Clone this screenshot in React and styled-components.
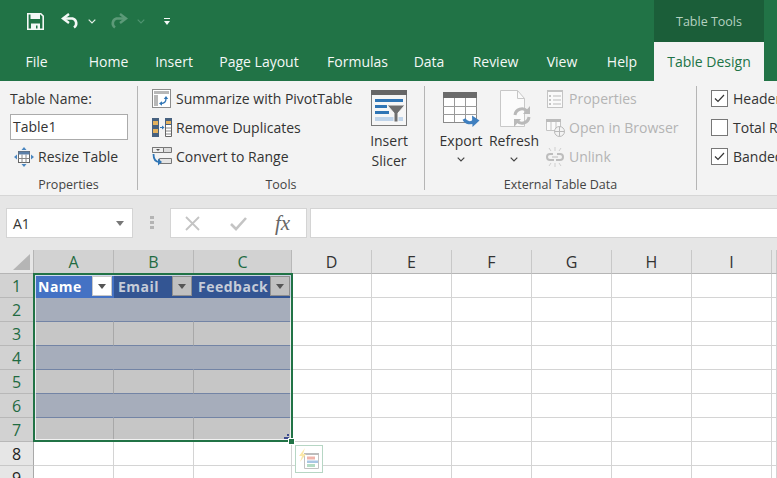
import React from 'react';
import styled, { createGlobalStyle } from 'styled-components';

const Global = createGlobalStyle`
  html, body { margin: 0; padding: 0; height: 100%; overflow: hidden; background: #fff; }
  body { font-family: "Open Sans", "Noto Sans", "Liberation Sans", sans-serif; font-size: 14px; color: #333; }
  * { box-sizing: border-box; }
  svg { display: block; flex: none; }
`;

const Window = styled.div`
  width: 777px;
  height: 478px;
  overflow: hidden;
  display: flex;
  flex-direction: column;
`;

const TitleBar = styled.div`
  height: 42px;
  flex: none;
  background: #217346;
  display: flex;
  align-items: center;
  padding-left: 27px;
`;

const Qat = styled.button`
  border: 0;
  padding: 0;
  background: none;
  display: flex;
  margin-left: ${p => p.$gap || 0}px;
`;

const ContextHeader = styled.div`
  margin-left: auto;
  margin-right: 13px;
  width: 110px;
  height: 42px;
  background: #1b5e39;
  color: #b5d1c1;
  font-size: 12.5px;
  display: flex;
  align-items: center;
  justify-content: center;
`;

const TabBar = styled.div`
  height: 39px;
  flex: none;
  background: #217346;
  display: flex;
`;

const Tab = styled.div`
  width: ${p => p.$w}px;
  height: 39px;
  line-height: 39px;
  text-align: center;
  white-space: nowrap;
  font-size: 14px;
  color: ${p => (p.$active ? '#217346' : '#f4f8f6')};
  background: ${p => (p.$active ? '#f3f3f3' : 'transparent')};
`;

const Ribbon = styled.div`
  height: 115px;
  background: #f3f3f3;
  border-bottom: 1px solid #d6d6d6;
  display: flex;
  flex: none;
`;

const Group = styled.div`
  width: ${p => p.$w}px;
  flex: none;
  display: flex;
  flex-direction: column;
  padding-top: 3px;
`;

const GroupBody = styled.div`
  display: flex;
  flex: 1;
  padding-left: ${p => p.$left || 0}px;
`;

const GroupLabel = styled.div`
  height: 20px;
  line-height: 20px;
  text-align: center;
  font-size: 12.5px;
  color: #444;
`;

const Sep = styled.div`
  width: 1px;
  flex: none;
  margin: 5px 0;
  background: #b5b5b5;
`;

const Stack = styled.div`
  display: flex;
  flex-direction: column;
  flex: none;
  width: ${p => (p.$w ? `${p.$w}px` : 'auto')};
  margin-left: ${p => p.$left || 0}px;
`;

const Row = styled.div`
  height: 29px;
  display: flex;
  align-items: center;
  gap: ${p => p.$gap ?? 4}px;
  white-space: nowrap;
  padding-left: ${p => p.$left || 0}px;
  color: ${p => (p.$off ? '#b4b4b4' : '#333')};
`;

const NameInput = styled.div`
  width: 118px;
  height: 26px;
  margin: 1px 0 2px;
  background: #fff;
  border: 1px solid #ababab;
  padding-left: 2px;
  line-height: 24px;
`;

const BigButton = styled.div`
  width: ${p => p.$w}px;
  flex: none;
  display: flex;
  flex-direction: column;
  align-items: center;
  line-height: 20px;
  text-align: center;
  color: #333;
`;

const BigIcon = styled.div`
  height: 44px;
  padding-bottom: ${p => p.$lift || 0}px;
  padding-left: ${p => p.$shift || 0}px;
  margin-bottom: 3px;
  display: flex;
  align-items: flex-end;
`;

const BigChevron = styled.span`
  margin-top: 6px;
`;

const Check = styled.span`
  width: 17px;
  height: 17px;
  border: 1px solid #777;
  background: #fff;
  display: flex;
  align-items: center;
  justify-content: center;
  flex: none;
`;

const FormulaBar = styled.div`
  height: 54px;
  flex: none;
  background: #e6e6e6;
  display: flex;
  align-items: flex-start;
  padding: 12px 0 0 6px;
`;

const NameBox = styled.div`
  width: 127px;
  height: 30px;
  background: #fff;
  border: 1px solid #d4d4d4;
  display: flex;
  align-items: center;
  justify-content: space-between;
  padding: 0 8px 0 6px;
`;

const Grip = styled.div`
  width: 37px;
  height: 30px;
  display: flex;
  align-items: center;
  justify-content: center;
`;

const FormulaButtons = styled.div`
  width: 137px;
  height: 30px;
  background: #fff;
  border: 1px solid #d4d4d4;
  display: flex;
  align-items: center;
  padding-left: 14px;
`;

const FormulaButton = styled.span`
  display: flex;
  margin-left: ${p => p.$gap || 0}px;
`;

const Fx = styled.span`
  font-family: "Liberation Serif", serif;
  font-style: italic;
  font-size: 21px;
  line-height: 24px;
  color: #666;
  margin-left: 28px;
`;

const FormulaInput = styled.div`
  flex: 1;
  height: 30px;
  margin-left: 3px;
  background: #fff;
  border: 1px solid #d4d4d4;
  border-right: 0;
`;

const Sheet = styled.div`
  position: relative;
  flex: none;
  display: grid;
  grid-template-columns: 34px 80px 80px 98px repeat(6, 80px) 5px;
  grid-template-rows: repeat(10, 24px);
  background: #fff;
`;

const Corner = styled.div`
  background: #e6e6e6;
  border-right: 1px solid #b5b5b5;
  border-bottom: 1px solid #b5b5b5;
  display: flex;
  align-items: flex-end;
  justify-content: flex-end;
  padding: 0 3px 3px 0;
`;

const ColHead = styled.div`
  background: ${p => (p.$on ? '#d2d2d2' : '#e6e6e6')};
  color: ${p => (p.$on ? '#1f6b42' : '#333')};
  border-right: 1px solid ${p => (p.$on ? '#b8b8b8' : '#c8c8c8')};
  border-bottom: 1px solid ${p => (p.$on ? '#217346' : '#b5b5b5')};
  display: flex;
  align-items: center;
  justify-content: center;
  font-size: 16px;
`;

const RowHead = styled.div`
  background: ${p => (p.$on ? '#d2d2d2' : '#e6e6e6')};
  color: ${p => (p.$on ? '#1f6b42' : '#222')};
  border-right: 1px solid #a9a9a9;
  border-bottom: 1px solid ${p => (p.$on ? '#b8b8b8' : '#c8c8c8')};
  display: flex;
  align-items: center;
  justify-content: center;
  font-size: 16px;
`;

const Cell = styled.div`
  border-right: 1px solid #d4d4d4;
  border-bottom: 1px solid #d4d4d4;
`;

const HeadCell = styled.div`
  background: ${p => (p.$on ? '#4472c4' : '#335593')};
  color: ${p => (p.$on ? '#fff' : '#c6ccd8')};
  display: flex;
  align-items: center;
  justify-content: space-between;
  padding: 0 2px 0 4px;
  font-weight: bold;
  font-size: 14px;
  white-space: nowrap;
  letter-spacing: 0.5px;
`;

const FilterBtn = styled.span`
  width: 20px;
  height: 20px;
  flex: none;
  background: ${p => (p.$on ? '#fff' : '#c0c0c0')};
  border: 1px solid ${p => (p.$on ? '#c8c8c8' : '#8f8f8f')};
  display: flex;
  align-items: center;
  justify-content: center;
  &::after {
    content: '';
    border-left: 4px solid transparent;
    border-right: 4px solid transparent;
    border-top: 5px solid #555;
  }
`;

const BandCell = styled.div`
  background: ${p => (p.$band ? '#a6adbb' : '#c6c6c6')};
  border-bottom: 1px solid #7384a5;
  border-right: 1px solid ${p => (p.$band ? '#a6adbb' : '#a8a8a8')};
`;

const Selection = styled.div`
  position: absolute;
  left: 33px;
  top: 23px;
  width: 260px;
  height: 169px;
  border: 2px solid #217346;
  pointer-events: none;
  box-shadow: inset 0 0 0 1px rgba(255, 255, 255, 0.75);
`;

const Handle = styled.div`
  position: absolute;
  right: -3px;
  bottom: -4px;
  width: 5px;
  height: 5px;
  background: #217346;
  outline: 1px solid #fff;
`;

const TableGrip = styled.div`
  position: absolute;
  right: 2px;
  bottom: 1px;
  display: flex;
`;

const QuickAnalysis = styled.div`
  position: absolute;
  left: 295px;
  top: 195px;
  width: 28px;
  height: 28px;
  background: #fff;
  border: 1px solid #b6d6c4;
  display: flex;
  align-items: center;
  justify-content: center;
`;

const Chevron = ({ color = '#444', size = 8 }) => (
  <svg width={size} height="5" viewBox="0 0 8 5"><path d="M.7.7 4 4 7.3.7" fill="none" stroke={color} strokeWidth="1.2" /></svg>
);

const SaveIcon = () => (
  <svg width="17" height="17" viewBox="0 0 17 17">
    <path d="M.8.8h13l2.4 2.4v13H.8z" fill="none" stroke="#f4f8f6" strokeWidth="1.6" />
    <path d="M3.5 1v5h9.5V1" fill="#f4f8f6" />
    <path d="M4 16v-5.5h9V16h-2.5v-3.5H9V16z" fill="#f4f8f6" />
  </svg>
);

const UndoIcon = ({ color, flip }) => (
  <svg width="19" height="16" viewBox="0 0 19 16" style={flip ? { transform: 'scaleX(-1)' } : undefined}>
    <path d="M8 1 2 5.5 8 10" fill="none" stroke={color} strokeWidth="2.4" />
    <path d="M3 5.5h8.5a5 5 0 0 1 1.5 9" fill="none" stroke={color} strokeWidth="2.6" />
  </svg>
);

const QatMore = () => (
  <svg width="6" height="7" viewBox="0 0 6 7"><path d="M0 0h6v1H0zM0 3h6L3 7z" fill="#f4f8f6" /></svg>
);

const ResizeIcon = () => (
  <svg width="20" height="20" viewBox="0 0 20 20">
    <rect x="4.5" y="4.5" width="11" height="11" fill="#fff" stroke="#666" />
    <path d="M4.5 4.5h11v3h-11z" fill="#5b7fa8" />
    <path d="M8 7.5v8M12 7.5v8M4.5 11.500h11" stroke="#888" />
    <path d="M10 0l2.500 3h-5zM10 20l2.500-3h-5zM0 10l3-2.500v5zM20 10l-3-2.500v5z" fill="#4a86c0" />
  </svg>
);

const PivotIcon = () => (
  <svg width="19" height="19" viewBox="0 0 19 19">
    <rect x=".5" y=".5" width="18" height="18" fill="#fff" stroke="#8c8c8c" />
    <path d="M2 2h15v3H2zM2 6h4v11H2z" fill="#b8b8b8" />
    <path d="M9 14.500c3 0 5-1.500 5-5" fill="none" stroke="#2f75b5" strokeWidth="1.3" />
    <path d="M14 7l2.200 3h-4.400zM7 14.500l3-2.200v4.400z" fill="#2f75b5" />
  </svg>
);

const DupIcon = () => (
  <svg width="20" height="19" viewBox="0 0 20 19">
    <path d="M0 0h7v19H0z" fill="#47617f" />
    <path d="M1 3h5v4H1zM1 11h5v4H1z" fill="#e5b25d" />
    <path d="M13.5.5h6v18h-6z" fill="#fff" stroke="#666" />
    <path d="M13 0h7v7h-7z" fill="#47617f" />
    <path d="M14 3h5v3h-5z" fill="#e5b25d" />
    <path d="M14 10h5M14 13h5M14 16h5" stroke="#888" />
    <path d="M8 9.500h3" stroke="#2f75b5" /><path d="M10 7.500l2.500 2-2.500 2z" fill="#2f75b5" />
  </svg>
);

const ConvertIcon = () => (
  <svg width="20" height="19" viewBox="0 0 20 19">
    <path d="M.5.5h19v5H.5z" fill="#ddd" stroke="#777" />
    <path d="M.5.5h11v5H.5z" fill="#eee" stroke="#777" />
    <path d="M4 2h4L6 4z" fill="#555" />
    <path d="M7.5 11.500h12v5h-12z" fill="#e4e4e4" stroke="#777" />
    <path d="M1.500 7c0 6 2 8 6 8" fill="none" stroke="#2f75b5" strokeWidth="1.8" />
    <path d="M6 11.500l4 3.500-4 3.500z" fill="#2f75b5" />
  </svg>
);

const SlicerIcon = () => (
  <svg width="36" height="36" viewBox="0 0 36 36">
    <rect x=".5" y=".5" width="35" height="35" fill="#f6f6f6" stroke="#7a7a7a" />
    <path d="M0 0h36v5H0z" fill="#666" />
    <path d="M4 9h28v3H4zM4 15h12v3H4zM4 21h14v3H4z" fill="#2f75b5" />
    <path d="M4 27h28v4H4z" fill="#bfd4ea" />
    <path d="M16 15h18l-7 8v9h-4v-9z" fill="#6e6e6e" stroke="#f6f6f6" />
  </svg>
);

const ExportIcon = () => (
  <svg width="37" height="36" viewBox="0 0 37 36">
    <rect x=".5" y=".5" width="33" height="30" fill="#fff" stroke="#8a8a8a" />
    <path d="M0 0h34v6H0z" fill="#6b6b6b" />
    <path d="M11.500 6v24M22.500 6v24M0 14.500h34M0 22.500h34" stroke="#9a9a9a" />
    <path d="M21 27c2 4 7 5 10 2" fill="none" stroke="#3f7fbf" strokeWidth="3.2" />
    <path d="M29 23.500l7.500 5-7 6.500z" fill="#3f7fbf" />
  </svg>
);

const RefreshIcon = () => (
  <svg width="31" height="38" viewBox="0 0 31 38">
    <path d="M.5.5h17l7 8v28H.5z" fill="#fbfbfb" stroke="#c8c8c8" />
    <path d="M17.500.5v8h7" fill="none" stroke="#c8c8c8" />
    <path d="M15 25a7 7 0 0 1 12-4M29 27a7 7 0 0 1-12 4" fill="none" stroke="#b9b9b9" strokeWidth="3" />
    <path d="M30 16v8h-7zM14 37v-8h7z" fill="#b9b9b9" />
  </svg>
);

const PropsIcon = () => (
  <svg width="16" height="18" viewBox="0 0 16 18">
    <rect x=".5" y=".5" width="15" height="17" fill="#fafafa" stroke="#c4c4c4" />
    <path d="M0 0h16v2H0z" fill="#c4c4c4" />
    <path d="M6 6h8M6 10h8M6 14h8" stroke="#bbb" />
    <path d="M2 5h2v2H2zM2 9h2v2H2zM2 13h2v2H2z" fill="#c4c4c4" />
  </svg>
);

const BrowserIcon = () => (
  <svg width="19" height="18" viewBox="0 0 19 18">
    <path d="M.5.5h14v11H.5z" fill="#fafafa" stroke="#c4c4c4" />
    <path d="M0 0h15v3H0z" fill="#bbb" />
    <path d="M5 3v8M10 3v8" stroke="#c4c4c4" />
    <circle cx="13.5" cy="12.5" r="5" fill="#f3f3f3" stroke="#b9b9b9" />
    <path d="M8.500 12.500h10M13.500 7.500v10" stroke="#b9b9b9" />
  </svg>
);

const UnlinkIcon = () => (
  <svg width="18" height="20" viewBox="0 0 18 20">
    <path d="M7 7H4a3 3 0 0 0 0 6h4M11 7h3a3 3 0 0 1 0 6h-4" fill="none" stroke="#bdbdbd" strokeWidth="2" />
    <path d="M6 10h6" stroke="#bdbdbd" />
    <path d="M9 0v4M9 16v4M3 1l2 3M15 1l-2 3M3 19l2-3M15 19l-2-3" stroke="#cfcfcf" />
  </svg>
);

const Tick = ({ color = '#333', width = 1.2 }) => (
  <svg width="11" height="9" viewBox="0 0 11 9"><path d="M1 4.500 4 7.500 10 1" fill="none" stroke={color} strokeWidth={width} /></svg>
);

const QuickIcon = () => (
  <svg width="20" height="22" viewBox="0 0 20 22">
    <path d="M5.500 5.500h14v15h-14z" fill="#fff" stroke="#c2c2c2" />
    <path d="M5 5h15v2H5z" fill="#bcbcbc" />
    <path d="M8 8.500h8v3H8z" fill="#f0b4ab" />
    <path d="M8 12.500h11v2.500H8z" fill="#a9c7e4" />
    <path d="M8 16h8v3H8z" fill="#b5dcc5" />
    <path d="M6 0 0 8h3l-2 6 6-8H4z" fill="#fbe8a8" />
  </svg>
);

const tabs = [['File', 73], ['Home', 71], ['Insert', 60], ['Page Layout', 110], ['Formulas', 87], ['Data', 56], ['Review', 77], ['View', 56], ['Help', 64]];
// the last column only peeks in at the window edge, its letter is out of view
const cols = ['A', 'B', 'C', 'D', 'E', 'F', 'G', 'H', 'I', ''];
const headers = [['Name', true], ['Email', false], ['Feedback', false]];
const rows = [1, 2, 3, 4, 5, 6, 7, 8, 9];

const ColumnHeads = () => (
  <>
    <Corner>
      <svg width="17" height="16" viewBox="0 0 17 16"><path d="M17 0v16H0z" fill="#b5b5b5" /></svg>
    </Corner>
    {cols.map((c, i) => <ColHead key={i} $on={i < 3}>{c}</ColHead>)}
  </>
);

const SheetRow = ({ n }) => {
  const inTable = n >= 2 && n <= 7;
  return (
    <>
      <RowHead $on={n <= 7}>{n}</RowHead>
      {cols.map((c, i) => {
        if (n === 1 && i < 3) {
          return (
            <HeadCell key={i} $on={headers[i][1]}>
              {headers[i][0]}
              <FilterBtn $on={headers[i][1]} />
            </HeadCell>
          );
        }
        if (inTable && i < 3) return <BandCell key={i} $band={n % 2 === 0} />;
        return <Cell key={i} />;
      })}
    </>
  );
};

export default function App() {
  return (
    <Window>
      <Global />
      <TitleBar>
        <Qat><SaveIcon /></Qat>
        <Qat $gap={17}><UndoIcon color="#f4f8f6" /></Qat>
        <Qat $gap={8}><Chevron color="#e6efe9" /></Qat>
        <Qat $gap={13}><UndoIcon color="#5c9a78" flip /></Qat>
        <Qat $gap={9}><Chevron color="#4f9370" /></Qat>
        <Qat $gap={19}><QatMore /></Qat>
        <ContextHeader>Table Tools</ContextHeader>
      </TitleBar>
      <TabBar>
        {tabs.map(([t, w]) => <Tab key={t} $w={w}>{t}</Tab>)}
        <Tab $active $w={110}>Table Design</Tab>
      </TabBar>
      <Ribbon>
        <Group $w={137}>
          <GroupBody $left={10}>
            <Stack>
              <Row>Table Name:</Row>
              <NameInput>Table1</NameInput>
              <Row $left={4}><ResizeIcon />Resize Table</Row>
            </Stack>
          </GroupBody>
          <GroupLabel>Properties</GroupLabel>
        </Group>
        <Sep />
        <Group $w={286}>
          <GroupBody $left={14}>
            <Stack $w={212}>
              <Row $gap={5}><PivotIcon />Summarize with PivotTable</Row>
              <Row $gap={4}><DupIcon />Remove Duplicates</Row>
              <Row $gap={4}><ConvertIcon />Convert to Range</Row>
            </Stack>
            <BigButton $w={50}>
              <BigIcon $lift={2}><SlicerIcon /></BigIcon>
              Insert<br />Slicer
            </BigButton>
          </GroupBody>
          <GroupLabel>Tools</GroupLabel>
        </Group>
        <Sep />
        <Group $w={271}>
          <GroupBody $left={12}>
            <BigButton $w={48}>
              <BigIcon><ExportIcon /></BigIcon>
              Export
              <BigChevron><Chevron /></BigChevron>
            </BigButton>
            <BigButton $w={58}>
              <BigIcon $shift={3}><RefreshIcon /></BigIcon>
              Refresh
              <BigChevron><Chevron /></BigChevron>
            </BigButton>
            <Stack $left={3}>
              <Row $off $left={1} $gap={6}><PropsIcon />Properties</Row>
              <Row $off $gap={4}><BrowserIcon />Open in Browser</Row>
              <Row $off $gap={5}><UnlinkIcon />Unlink</Row>
            </Stack>
          </GroupBody>
          <GroupLabel>External Table Data</GroupLabel>
        </Group>
        <Sep />
        <Group $w={80}>
          <GroupBody $left={14}>
            <Stack>
              <Row $gap={5}><Check><Tick /></Check>Header Row</Row>
              <Row $gap={5}><Check />Total Row</Row>
              <Row $gap={5}><Check><Tick /></Check>Banded Rows</Row>
            </Stack>
          </GroupBody>
        </Group>
      </Ribbon>
      <FormulaBar>
        <NameBox>
          A1
          <svg width="8" height="5" viewBox="0 0 8 5"><path d="M0 0h8L4 5z" fill="#777" /></svg>
        </NameBox>
        <Grip>
          <svg width="4" height="14" viewBox="0 0 4 14"><path d="M0 0h4v3H0zM0 5h4v3H0zM0 10h4v3H0z" fill="#b4b4b4" /></svg>
        </Grip>
        <FormulaButtons>
          <FormulaButton>
            <svg width="15" height="15" viewBox="0 0 15 15"><path d="M1 1l13 13M14 1 1 14" stroke="#c4c4c4" strokeWidth="1.8" /></svg>
          </FormulaButton>
          <FormulaButton $gap={30}>
            <svg width="17" height="15" viewBox="0 0 17 15"><path d="M1 8l5 5 10-11" fill="none" stroke="#c4c4c4" strokeWidth="2.6" /></svg>
          </FormulaButton>
          <Fx>fx</Fx>
        </FormulaButtons>
        <FormulaInput />
      </FormulaBar>
      <Sheet>
        <ColumnHeads />
        {rows.map(n => <SheetRow key={n} n={n} />)}
        <Selection>
          <TableGrip>
            <svg width="5" height="5" viewBox="0 0 5 5"><path d="M3 0h2v2H3zM0 3h5v2H0z" fill="#3d4c8f" /></svg>
          </TableGrip>
          <Handle />
        </Selection>
        <QuickAnalysis><QuickIcon /></QuickAnalysis>
      </Sheet>
    </Window>
  );
}
